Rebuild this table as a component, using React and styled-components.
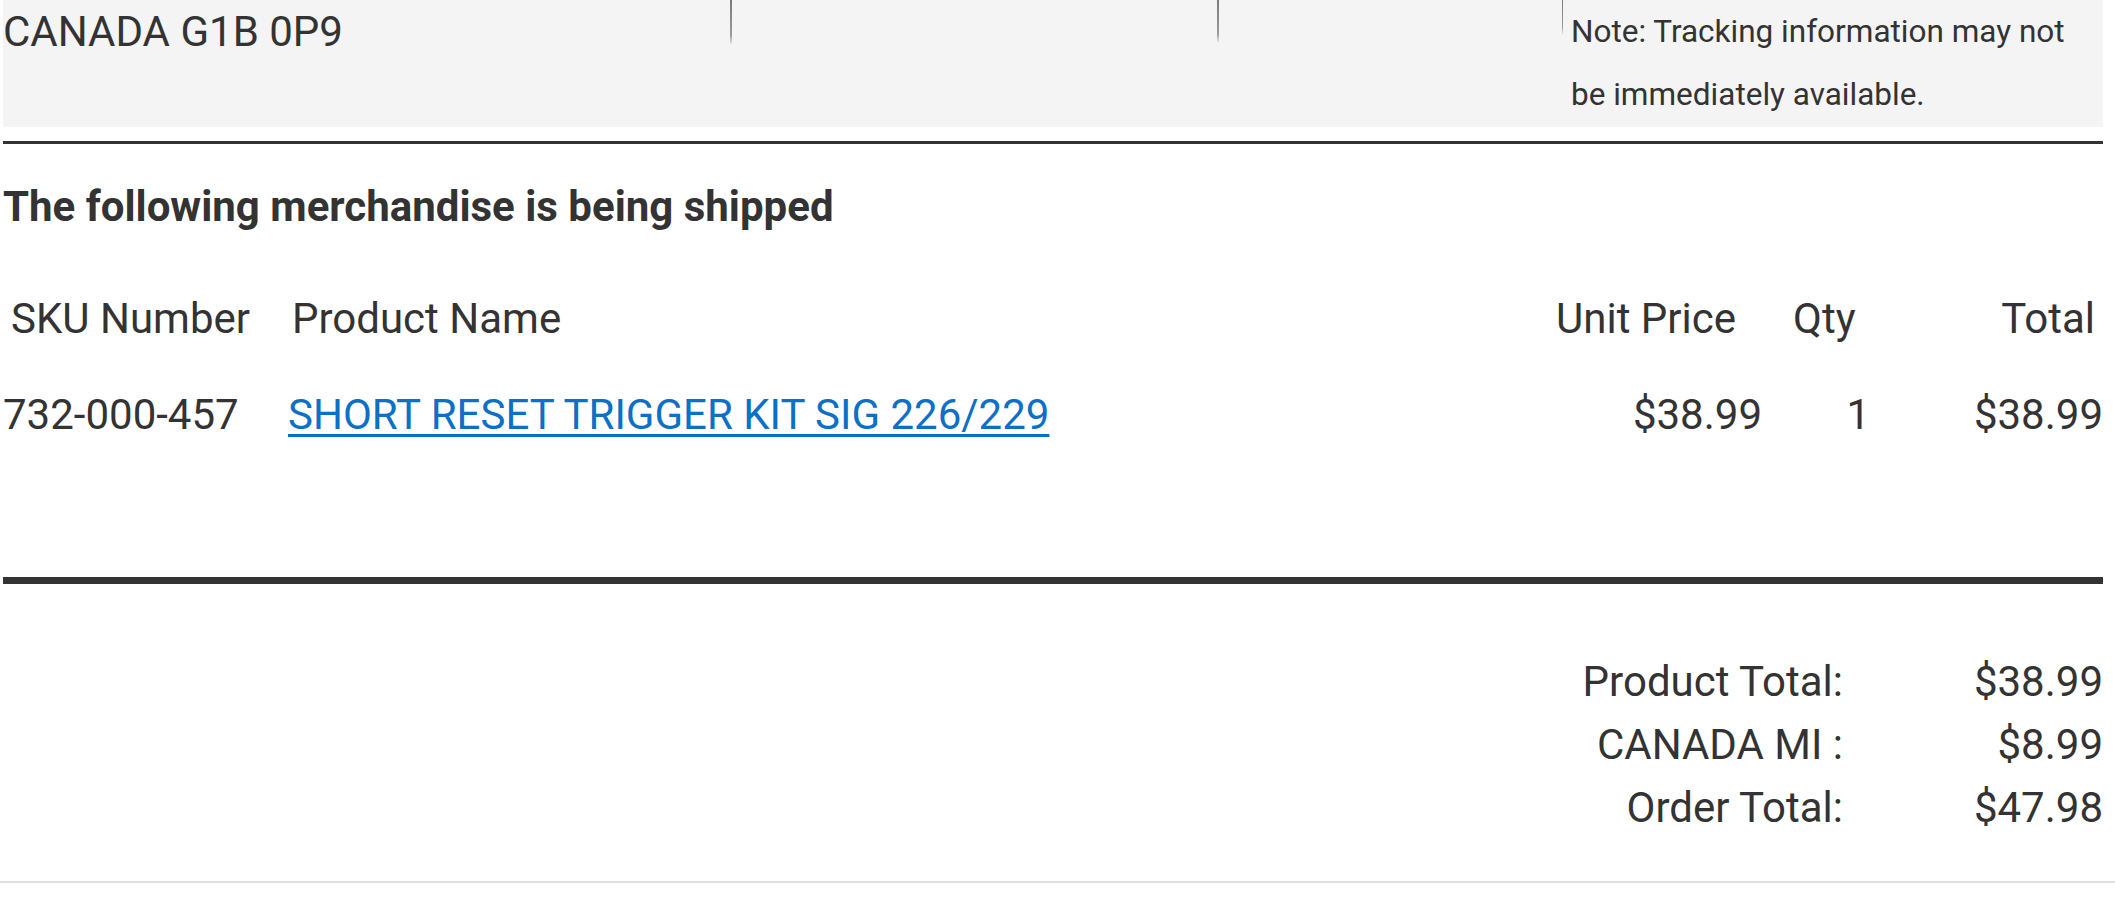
import React from "react";
import styled, { createGlobalStyle } from "styled-components";

const GlobalStyle = createGlobalStyle`
  body {
    margin: 0;
    background: #fff;
    font-family: Roboto, "Liberation Sans", sans-serif;
    color: #333;
  }
`;

const Page = styled.div`
  border-bottom: 2px solid #e0e0e0;
`;

const Content = styled.div`
  margin: 0 12px 0 3px;
`;

const AddressRow = styled.div`
  display: grid;
  grid-template-columns: 727px 487px 345px 1fr;
  height: 127px;
  background: #f4f4f4;
`;

const AddressCell = styled.div`
  font-size: 42px;
  line-height: 63px;
`;

const DividerCell = styled.div`
  position: relative;
`;

const Stub = styled.span`
  display: block;
  flex: none;
  width: ${(p) => p.$w}px;
  height: ${(p) => p.$h}px;
  background: linear-gradient(#7a7a7a, #9a9a9a 80%, rgba(200, 200, 200, 0.4));
`;

const NoteCell = styled.div`
  display: flex;
`;

const NoteText = styled.div`
  padding: 0 0 0 8px;
  font-size: 31.5px;
  line-height: 63px;
  white-space: nowrap;
`;

const Rule = styled.div`
  height: ${(p) => p.$h}px;
  margin-top: ${(p) => p.$top}px;
  background: #333;
`;

const Heading = styled.h2`
  margin: 39px 0 0;
  font-size: 42px;
  font-weight: 700;
  line-height: 48px;
`;

const ItemTable = styled.div`
  margin-top: 39px;
  display: grid;
  grid-template-columns: 281px 1fr 225px 110px 228px;
  grid-auto-rows: 96px;
  align-items: center;
  font-size: 42px;
  line-height: 63px;
`;

const HeadCell = styled.div`
  text-align: ${(p) => p.$align || "left"};
  padding: 0 ${(p) => p.$pr || 0}px 0 ${(p) => p.$pl || 0}px;
  white-space: nowrap;
`;

const DataCell = styled(HeadCell)``;

const ProductLink = styled.a`
  color: #0b70c6;
  text-decoration: underline;
  text-decoration-thickness: 3px;
  text-underline-offset: 5px;
`;

const Totals = styled.div`
  margin-top: 66px;
  padding-bottom: 42px;
  display: grid;
  grid-template-columns: 1fr 260px;
  font-size: 42px;
  line-height: 63px;
`;

const TotalLabel = styled.div`
  text-align: right;
`;

const TotalValue = styled.div`
  text-align: right;
`;

const totals = [
  ["Product Total:", "$38.99"],
  ["CANADA MI :", "$8.99"],
  ["Order Total:", "$47.98"],
];

export default function App() {
  return (
    <Page>
      <GlobalStyle />
      <Content>
        <AddressRow>
          <AddressCell>CANADA G1B 0P9</AddressCell>
          <DividerCell>
            <Stub $w={2} $h={44} />
          </DividerCell>
          <DividerCell>
            <Stub $w={2} $h={42} />
          </DividerCell>
          <NoteCell>
            <Stub $w={1} $h={34} />
            <NoteText>
              Note: Tracking information may not
              <br />
              be immediately available.
            </NoteText>
          </NoteCell>
        </AddressRow>

        <Rule $h={3} $top={14} />

        <Heading>The following merchandise is being shipped</Heading>

        <ItemTable>
          <HeadCell $pl={8}>SKU Number</HeadCell>
          <HeadCell $pl={8}>Product Name</HeadCell>
          <HeadCell $pl={16}>Unit Price</HeadCell>
          <HeadCell $pl={28}>Qty</HeadCell>
          <HeadCell $align="right" $pr={8}>Total</HeadCell>

          <DataCell>732-000-457</DataCell>
          <DataCell $pl={4}>
            <ProductLink href="#">SHORT RESET TRIGGER KIT SIG 226/229</ProductLink>
          </DataCell>
          <DataCell $align="right" $pr={3}>$38.99</DataCell>
          <DataCell $align="right" $pr={5}>1</DataCell>
          <DataCell $align="right">$38.99</DataCell>
        </ItemTable>

        <Rule $h={7} $top={115} />

        <Totals>
          {totals.map(([label, value]) => (
            <React.Fragment key={label}>
              <TotalLabel>{label}</TotalLabel>
              <TotalValue>{value}</TotalValue>
            </React.Fragment>
          ))}
        </Totals>
      </Content>
    </Page>
  );
}
